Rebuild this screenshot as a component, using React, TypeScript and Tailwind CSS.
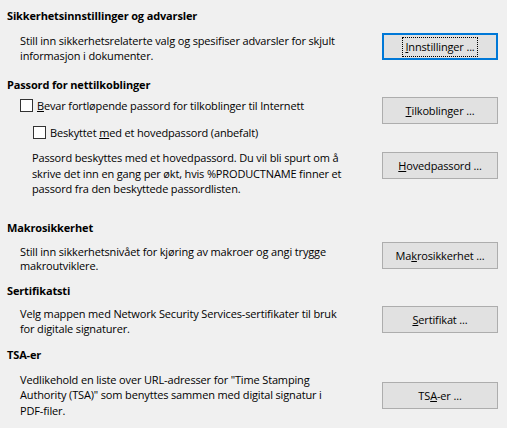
import React from 'react';

const Btn = ({ children, focused = false, className = '' }: { children: React.ReactNode; focused?: boolean; className?: string }) => (
  <button
    className={
      'w-[116px] h-[27px] flex items-center justify-center bg-[#e1e1e1] text-black shrink-0 ' +
      (focused ? 'border-2 border-[#0078d7] ' : 'border border-[#adadad] ') +
      className
    }
  >
    {focused ? (
      <span className="outline outline-1 outline-dotted outline-black px-[2px] leading-[18px]">{children}</span>
    ) : (
      children
    )}
  </button>
);

const Check = ({ children }: { children: React.ReactNode }) => (
  <div className="flex items-center h-4">
    <span className="w-[13px] h-[13px] border border-[#333333] bg-white mr-[4px] shrink-0" />
    <span>{children}</span>
  </div>
);

const Heading = ({ children, className = '' }: { children: React.ReactNode; className?: string }) => (
  <div className={'font-bold leading-4 pl-[7px] ' + className}>{children}</div>
);

export default function App() {
  return (
    <div className="w-[507px] h-[428px] bg-[#f0f0f0] text-black text-[11px] leading-[15px] tracking-[-0.15px] font-['Open_Sans',sans-serif] overflow-hidden pt-[8px]">
      <Heading>Sikkerhetsinnstillinger og advarsler</Heading>

      <div className="flex justify-between pr-[9px] mt-[9px]">
        <p className="pl-[20px]">
          Still inn sikkerhetsrelaterte valg og spesifiser advarsler for skjult
          <br />
          informasjon i dokumenter.
        </p>
        <Btn focused>
          <u>I</u>nnstillinger ...
        </Btn>
      </div>

      <Heading className="mt-[14px]">Passord for nettilkoblinger</Heading>

      <div className="flex justify-between pr-[9px] mt-[4px]">
        <div className="flex flex-col">
          <div className="pl-[20px]">
            <Check>
              <u>B</u>evar fortløpende passord for tilkoblinger til Internett
            </Check>
          </div>
          <div className="pl-[33px] mt-[11px]">
            <Check>
              Beskyttet <u>m</u>ed et hovedpassord (anbefalt)
            </Check>
          </div>
          <p className="pl-[32px] mt-[10px] leading-[15.5px]">
            Passord beskyttes med et hovedpassord. Du vil bli spurt om å
            <br />
            skrive det inn en gang per økt, hvis %PRODUCTNAME finner et
            <br />
            passord fra den beskyttede passordlisten.
          </p>
        </div>
        <div className="flex flex-col">
          <Btn>
            <u>T</u>ilkoblinger ...
          </Btn>
          <Btn className="mt-[28px]">
            <u>H</u>ovedpassord ...
          </Btn>
        </div>
      </div>

      <Heading className="mt-[23px]">Makrosikkerhet</Heading>

      <div className="flex justify-between pr-[9px] mt-[6px]">
        <p className="pl-[20px] mt-[3px] leading-[14.5px]">
          Still inn sikkerhetsnivået for kjøring av makroer og angi trygge
          <br />
          makroutviklere.
        </p>
        <Btn>
          Ma<u>k</u>rosikkerhet ...
        </Btn>
      </div>

      <Heading className="mt-[9px]">Sertifikatsti</Heading>

      <div className="flex justify-between pr-[9px] mt-[7px]">
        <p className="pl-[20px]">
          Velg mappen med Network Security Services-sertifikater til bruk
          <br />
          for digitale signaturer.
        </p>
        <Btn>
          <u>S</u>ertifikat ...
        </Btn>
      </div>

      <Heading className="mt-[11px]">TSA-er</Heading>

      <div className="flex justify-between pr-[9px] mt-[9px]">
        <p className="pl-[20px] leading-[15.5px]">
          Vedlikehold en liste over URL-adresser for "Time Stamping
          <br />
          Authority (TSA)" som benyttes sammen med digital signatur i
          <br />
          PDF-filer.
        </p>
        <Btn className="mt-[10px]">
          TS<u>A</u>-er ...
        </Btn>
      </div>
    </div>
  );
}
